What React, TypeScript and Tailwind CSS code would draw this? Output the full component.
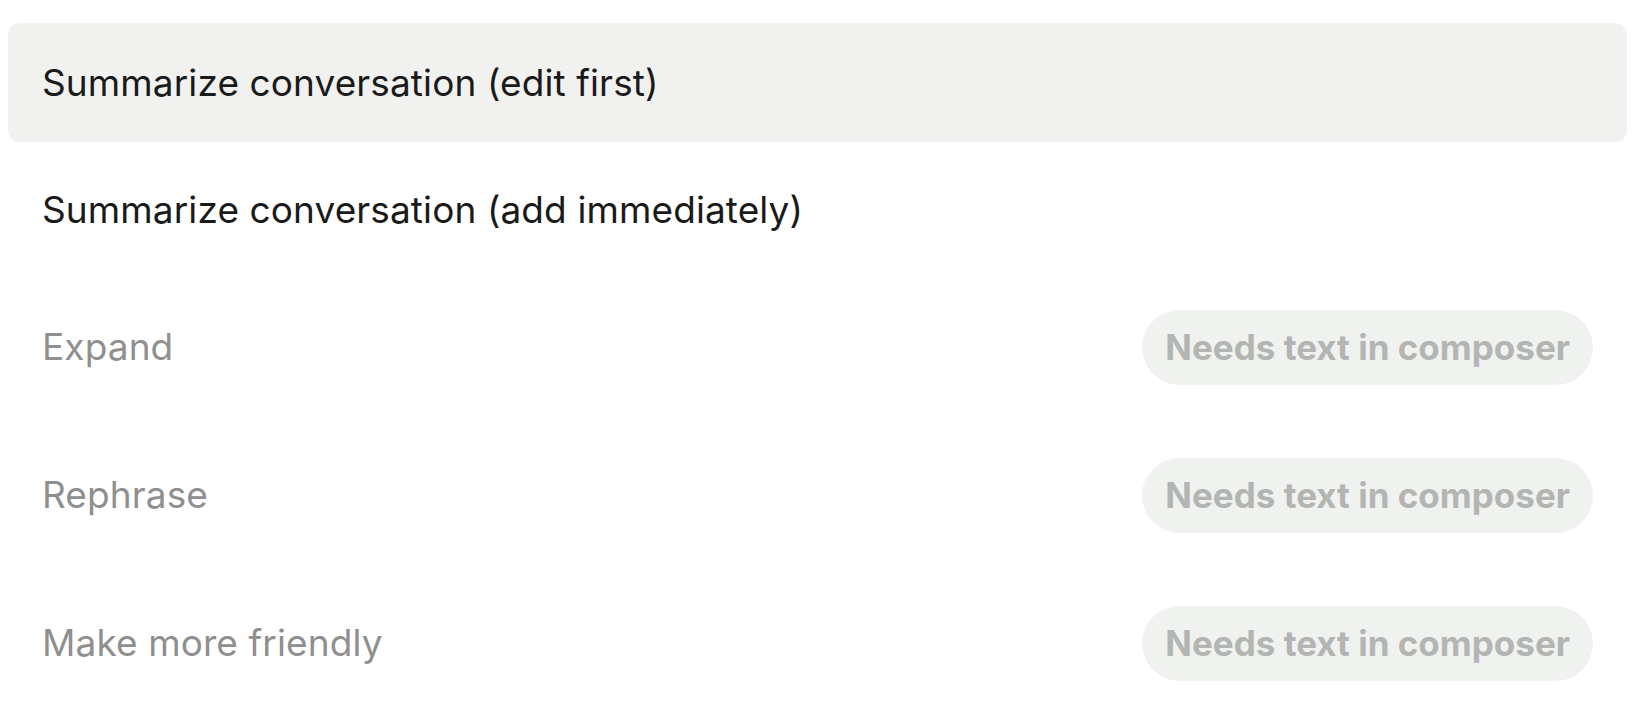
import React from 'react';

interface Action {
  label: string;
  disabled?: boolean;
  active?: boolean;
}

const ACTIONS: Action[] = [
  { label: 'Summarize conversation (edit first)', active: true },
  { label: 'Summarize conversation (add immediately)' },
  { label: 'Expand', disabled: true },
  { label: 'Rephrase', disabled: true },
  { label: 'Make more friendly', disabled: true },
];

export default function App() {
  return (
    <div
      className="w-[1640px] h-[714px] bg-white pl-[8px] pr-[13px] pt-[23px] overflow-hidden"
      style={{ fontFamily: 'Inter, "Liberation Sans", Arial, sans-serif' }}
    >
      <ul className="flex flex-col">
        {ACTIONS.map((a, i) => (
          <li
            key={a.label}
            className={
              'flex items-center justify-between px-[34px] rounded-[12px] ' +
              (a.active
                ? 'h-[119px] bg-[#f1f2ef]'
                : i === 1
                  ? 'h-[126px] mt-[5px]'
                  : 'h-[148px]')
            }
          >
            <span
              className={
                'text-[37px] tracking-[0.1px] ' +
                (a.disabled ? 'text-[#8f8f8f]' : 'text-[#1a1a1a]')
              }
            >
              {a.label}
            </span>
            {a.disabled && (
              <span className="h-[75px] flex items-center px-[23px] rounded-full bg-[#f0f2ef] text-[35px] font-bold text-[#b3b5b3]">
                Needs text in composer
              </span>
            )}
          </li>
        ))}
      </ul>
    </div>
  );
}
